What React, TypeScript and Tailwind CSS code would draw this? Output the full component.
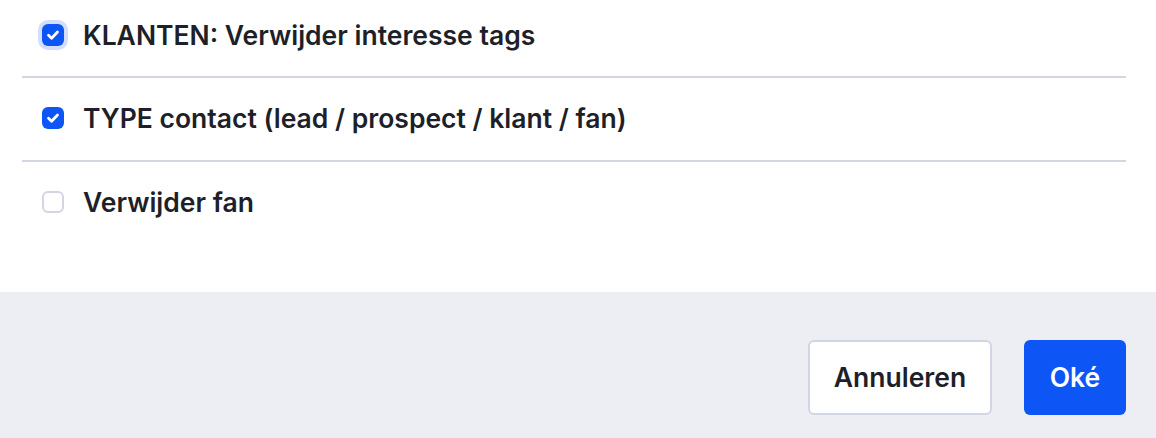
import React from "react";

const Check = () => (
  <svg viewBox="0 0 22 22" className="w-[22px] h-[22px]">
    <path d="M6.5 11.3 L9.6 14.3 L15.5 8" fill="none" stroke="white" strokeWidth="2.8" strokeLinecap="round" strokeLinejoin="round" />
  </svg>
);

function Box({ checked, focus }: { checked: boolean; focus?: boolean }) {
  if (checked) {
    return (
      <div className={"w-[22px] h-[22px] rounded-[6px] bg-[#0d55f5] flex items-center justify-center shrink-0 " + (focus ? "ring-[4px] ring-[#d4defc]" : "")}>
        <Check />
      </div>
    );
  }
  return <div className="w-[22px] h-[22px] rounded-[6px] border-2 border-[#d2d5e2] bg-white shrink-0" />;
}

const label = "h-[30px] leading-[30px] text-[26.5px] font-semibold text-[#1e1f28]";

export default function App() {
  return (
    <div className="w-[1156px] h-[438px] bg-white flex flex-col" style={{ fontFamily: "Inter, 'Noto Sans', sans-serif" }}>
      <div className="flex-1 pl-[22px] pr-[30px]">
        <div className="flex items-center gap-[19px] pl-[20px] pt-[20px] pb-[26px] border-b-2 border-[#d3d6e2]">
          <Box checked focus />
          <span className={label}>KLANTEN: Verwijder interesse tags</span>
        </div>
        <div className="flex items-center gap-[19px] pl-[20px] pt-[25px] pb-[27px] border-b-2 border-[#d3d6e2]">
          <Box checked />
          <span className={label}>TYPE contact (lead / prospect / klant / fan)</span>
        </div>
        <div className="flex items-center gap-[19px] pl-[20px] pt-[25px]">
          <Box checked={false} />
          <span className={label}>Verwijder fan</span>
        </div>
      </div>
      <div className="h-[146px] bg-[#edeef4] flex items-start justify-end gap-[32px] pt-[48px] pr-[30px]">
        <button className="w-[184px] h-[75px] rounded-[6px] border-2 border-[#d3d6e2] bg-white text-[26.5px] font-semibold text-[#1e1f28]">Annuleren</button>
        <button className="w-[102px] h-[75px] rounded-[6px] bg-[#0d55f5] text-[26.5px] font-semibold text-white">Oké</button>
      </div>
    </div>
  );
}
